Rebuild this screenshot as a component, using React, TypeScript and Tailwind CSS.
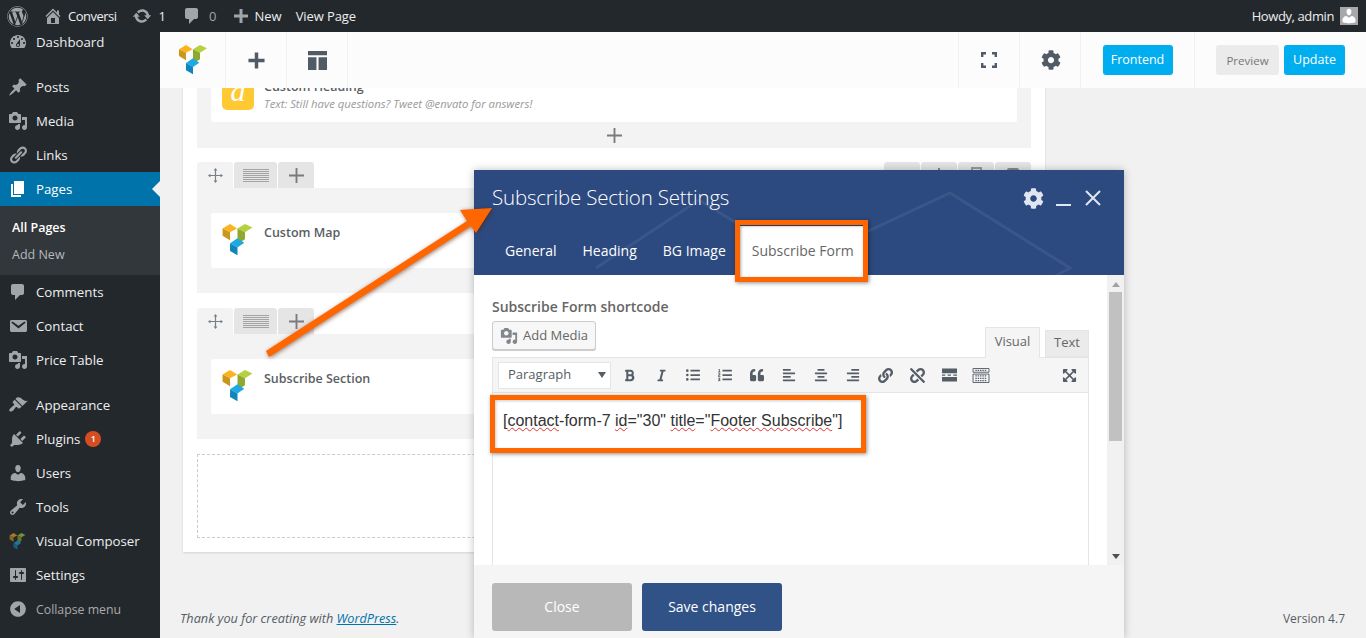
import type { ReactNode } from 'react'
import {
  FaAlignCenter,
  FaAlignLeft,
  FaAlignRight,
  FaBold,
  FaCog,
  FaExpandArrowsAlt,
  FaItalic,
  FaLink,
  FaListOl,
  FaListUl,
  FaQuoteLeft,
  FaUnlink,
  FaWordpress,
} from 'react-icons/fa'

const paths = {
  dashboard:
    'M3.76 16h12.48c1.1-1.37 1.76-3.11 1.76-5 0-4.42-3.58-8-8-8s-8 3.58-8 8c0 1.89.66 3.63 1.76 5zM10 4c.55 0 1 .45 1 1s-.45 1-1 1-1-.45-1-1 .45-1 1-1zM6 6c.55 0 1 .45 1 1s-.45 1-1 1-1-.45-1-1 .45-1 1-1zm8 0c.55 0 1 .45 1 1s-.45 1-1 1-1-.45-1-1 .45-1 1-1zm-5.37 5.55L12 7v6c0 1.1-.9 2-2 2s-2-.9-2-2c0-.57.24-1.08.63-1.45zM4 10c.55 0 1 .45 1 1s-.45 1-1 1-1-.45-1-1 .45-1 1-1zm12 0c.55 0 1 .45 1 1s-.45 1-1 1-1-.45-1-1 .45-1 1-1zm-5 3c0-.55-.45-1-1-1s-1 .45-1 1 .45 1 1 1 1-.45 1-1z',
  post: 'M10.44 3.02l1.82-1.82 6.36 6.35-1.83 1.82c-1.05-.68-2.48-.57-3.41.36l-.75.75c-.92.93-1.04 2.35-.35 3.41l-1.83 1.82-2.41-2.41-2.8 2.79c-.42.42-3.38 2.71-3.8 2.29s1.86-3.39 2.28-3.81l2.79-2.79L4.1 9.36l1.83-1.82c1.05.69 2.48.57 3.4-.36l.75-.75c.93-.92 1.05-2.35.36-3.41z',
  media:
    'M13 11V4c0-.55-.45-1-1-1h-1.67L9 1H5L3.67 3H2c-.55 0-1 .45-1 1v7c0 .55.45 1 1 1h10c.55 0 1-.45 1-1zM7 4.5c1.38 0 2.5 1.12 2.5 2.5S8.38 9.5 7 9.5 4.5 8.38 4.5 7 5.62 4.5 7 4.5zM14 6h5v10.5c0 1.38-1.12 2.5-2.5 2.5S14 17.88 14 16.5s1.12-2.5 2.5-2.5c.17 0 .34.02.5.05V9h-3V6zm-4 8.05V13h2v3.5c0 1.38-1.12 2.5-2.5 2.5S7 17.88 7 16.5 8.12 14 9.5 14c.17 0 .34.02.5.05z',
  links:
    'M17.74 2.76c1.68 1.69 1.68 4.41 0 6.1l-1.53 1.52c-1.12 1.12-2.7 1.47-4.14 1.09l2.62-2.61.76-.77.76-.76c.84-.84.84-2.2 0-3.04-.84-.85-2.2-.85-3.04 0l-.77.76-3.38 3.38c-.37-1.44-.02-3.02 1.1-4.14l1.52-1.53c1.69-1.68 4.42-1.68 6.1 0zM8.59 13.43l5.34-5.34c.42-.42.42-1.1 0-1.52-.44-.43-1.13-.39-1.53 0l-5.33 5.34c-.42.42-.42 1.1 0 1.52.44.43 1.13.39 1.52 0zm-.76 2.29l4.14-4.15c.38 1.44.03 3.02-1.09 4.14l-1.52 1.53c-1.69 1.68-4.41 1.68-6.1 0-1.68-1.68-1.68-4.42 0-6.1l1.53-1.52c1.12-1.12 2.7-1.47 4.14-1.1l-4.14 4.15c-.85.84-.85 2.2 0 3.05.84.84 2.2.84 3.04 0z',
  page: 'M6 15V2h10v13H6zm-1 1h8v2H3V5h2v11z',
  comment: 'M5 2h9c1.1 0 2 .9 2 2v7c0 1.1-.9 2-2 2h-2l-5 5v-5H5c-1.1 0-2-.9-2-2V4c0-1.1.9-2 2-2z',
  email:
    'M3.87 4h13.25C18.37 4 19 4.59 19 5.79v8.42c0 1.19-.63 1.79-1.88 1.79H3.87c-1.25 0-1.88-.6-1.88-1.79V5.79c0-1.2.63-1.79 1.88-1.79zm6.62 8.6l6.74-5.53c.24-.2.43-.66.13-1.07-.29-.41-.82-.42-1.17-.17l-5.7 3.86L4.8 5.83c-.35-.25-.88-.24-1.17.17-.3.41-.11.87.13 1.07z',
  brush:
    'M14.48 11.06L7.41 3.99l1.5-1.5c.5-.56 2.3-.47 3.51.32 1.21.8 1.43 1.28 2.91 2.1 1.18.64 2.45 1.26 4.45.85zm-.71.71L6.7 4.7 4.93 6.47c-.39.39-.39 1.02 0 1.41l1.06 1.06c.39.39.39 1.03 0 1.42-.6.6-1.43 1.11-2.21 1.69-.35.26-.7.53-1.01.84C1.43 13.71.96 15.12 1.37 16c.95.95 2.81.49 3.8-.49.32-.32.59-.66.85-1.01.58-.79 1.09-1.62 1.69-2.21.39-.39 1.02-.39 1.41 0l1.06 1.06c.39.39 1.02.39 1.41 0z',
  plugin:
    'M13.11 4.36L9.87 7.6 8 5.73l3.24-3.24c.35-.34 1.05-.2 1.56.32.52.51.66 1.21.31 1.55zm-8 1.77l.91-1.12 9.01 9.01-1.19.84c-.71.71-2.63 1.16-3.82 1.16H6.14L4.9 17.26c-.59.59-1.54.59-2.12 0-.59-.58-.59-1.53 0-2.12l1.24-1.24v-3.88c0-1.13.4-3.19 1.09-3.89zm7.26 3.97l3.24-3.24c.34-.35 1.04-.21 1.55.31.52.51.66 1.21.31 1.55l-3.24 3.25z',
  users:
    'M10 9.25c-2.27 0-2.73-3.44-2.73-3.44C7 4.02 7.82 2 9.97 2c2.16 0 2.98 2.02 2.71 3.81 0 0-.41 3.44-2.68 3.44zm0 2.57L12.72 10c2.39 0 4.52 2.33 4.52 4.53v2.49s-3.65 1.13-7.24 1.13c-3.65 0-7.24-1.13-7.24-1.13v-2.49c0-2.25 1.94-4.48 4.47-4.48z',
  tools:
    'M16.68 9.77c-1.34 1.34-3.3 1.67-4.95.99l-5.41 6.52c-.99.99-2.59.99-3.58 0s-.99-2.59 0-3.57l6.52-5.42c-.68-1.65-.35-3.61.99-4.95 1.28-1.28 3.12-1.62 4.72-1.06l-2.89 2.89 2.82 2.82 2.86-2.87c.53 1.58.18 3.39-1.08 4.65zM3.81 16.21c.4.39 1.04.39 1.43 0 .4-.4.4-1.04 0-1.43-.39-.4-1.03-.4-1.43 0-.39.39-.39 1.03 0 1.43z',
  settings:
    'M18 16V4c0-.55-.45-1-1-1H3c-.55 0-1 .45-1 1v12c0 .55.45 1 1 1h14c.55 0 1-.45 1-1zM8 11h1c.55 0 1 .45 1 1s-.45 1-1 1H8v1.5c0 .28-.22.5-.5.5s-.5-.22-.5-.5V13H6c-.55 0-1-.45-1-1s.45-1 1-1h1V5.5c0-.28.22-.5.5-.5s.5.22.5.5V11zm5-2h-1c-.55 0-1-.45-1-1s.45-1 1-1h1V5.5c0-.28.22-.5.5-.5s.5.22.5.5V7h1c.55 0 1 .45 1 1s-.45 1-1 1h-1v5.5c0 .28-.22.5-.5.5s-.5-.22-.5-.5V9z',
  collapse: 'M10 2.16c4.33 0 7.84 3.51 7.84 7.84s-3.51 7.84-7.84 7.84S2.16 14.33 2.16 10 5.71 2.16 10 2.16zm2 11.72V6.12L6.18 9.97z',
  home: 'M16 8.5l1.53 1.53-1.06 1.06L10 4.62l-6.47 6.47-1.06-1.06L10 2.5l4 4v-2h2v4zm-6-2.46l6 5.99V18H4v-5.97zM12 17v-5H8v5h4z',
  update:
    'M10.2 3.28c3.53 0 6.43 2.61 6.92 6h2.08l-3.5 4-3.5-4h2.32c-.45-1.97-2.21-3.44-4.32-3.44-1.45 0-2.73.71-3.54 1.78L4.95 5.66C6.23 4.2 8.11 3.28 10.2 3.28zm-.4 13.44c-3.52 0-6.43-2.61-6.92-6H.8l3.5-4c1.17 1.33 2.33 2.67 3.5 4H5.48c.45 1.97 2.21 3.44 4.32 3.44 1.45 0 2.73-.71 3.54-1.78l1.71 1.95c-1.28 1.46-3.15 2.39-5.25 2.39z',
  plus: 'M8.5 3h3v5.5H17v3h-5.5V17h-3v-5.5H3v-3h5.5z',
}

function Dash({ d, className }: { d: string; className?: string }) {
  return (
    <svg viewBox="0 0 20 20" fill="currentColor" className={className}>
      <path d={d} />
    </svg>
  )
}

function VcLogo({ className, dim }: { className?: string; dim?: boolean }) {
  return (
    <svg viewBox="0 0 84 90" className={className} style={dim ? { opacity: 0.6 } : undefined}>
      <polygon points="0,13 21,0 41,13 21,23" fill="#fbb41f" />
      <polygon points="0,13 21,23 21,46 0,33" fill="#c8971b" />
      <polygon points="42,13 63,0 84,10 63,23" fill="#b4d140" />
      <polygon points="42,13 63,23 63,43 42,56" fill="#8fa82e" />
      <polygon points="21,54 42,40 61,53 42,66" fill="#1fa9e3" />
      <polygon points="21,54 42,66 42,88 21,76" fill="#0e86bd" />
    </svg>
  )
}

function AdminBar() {
  return (
    <header className="relative z-20 flex h-8 items-center bg-[#23282d] text-[13px] text-[#eeeeee]">
      <FaWordpress className="ml-[7px] size-[21px] text-[#a0a5aa]" />
      <Dash d={paths.home} className="ml-[15px] size-5 text-[#a0a5aa]" />
      <span className="ml-[5px] pt-[2px] tracking-[-0.5px]">Conversi</span>
      <Dash d={paths.update} className="ml-[15px] size-5 text-[#a0a5aa]" />
      <span className="ml-[7px] pt-[2px]">1</span>
      <Dash d={paths.comment} className="ml-[16px] size-5 text-[#a0a5aa]" />
      <span className="ml-[7px] pt-[2px] text-[#a0a5aa]">0</span>
      <Dash d={paths.plus} className="ml-[15px] size-[20px] text-[#a0a5aa]" />
      <span className="ml-[3px] pt-[2px]">New</span>
      <span className="ml-[14px] pt-[2px] tracking-[-0.1px]">View Page</span>
      <span className="ml-auto pt-[2px] tracking-[-0.4px]">Howdy, admin</span>
      <div className="mr-2 ml-[6px] flex size-[18px] items-end justify-center overflow-hidden bg-[#a8a8a8]">
        <Dash d={paths.users} className="size-[18px] text-white" />
      </div>
    </header>
  )
}

type MenuItem = { label: string; icon: ReactNode; gapBefore?: boolean; badge?: string }

const icon = 'size-5 text-[#a0a5aa]'
const menu: MenuItem[] = [
  { label: 'Dashboard', icon: <Dash d={paths.dashboard} className={icon} /> },
  { label: 'Posts', icon: <Dash d={paths.post} className={icon} />, gapBefore: true },
  { label: 'Media', icon: <Dash d={paths.media} className={icon} /> },
  { label: 'Links', icon: <Dash d={paths.links} className={icon} /> },
]
const menuAfter: MenuItem[] = [
  { label: 'Comments', icon: <Dash d={paths.comment} className={icon} /> },
  { label: 'Contact', icon: <Dash d={paths.email} className={icon} /> },
  { label: 'Price Table', icon: <Dash d={paths.media} className={icon} /> },
  { label: 'Appearance', icon: <Dash d={paths.brush} className={icon} />, gapBefore: true },
  { label: 'Plugins', icon: <Dash d={paths.plugin} className={icon} />, badge: '1' },
  { label: 'Users', icon: <Dash d={paths.users} className={icon} /> },
  { label: 'Tools', icon: <Dash d={paths.tools} className={icon} /> },
  { label: 'Visual Composer', icon: <VcLogo dim className="size-[17px]" /> },
  { label: 'Settings', icon: <Dash d={paths.settings} className={icon} /> },
]

function MenuRow({ item }: { item: MenuItem }) {
  return (
    <li className={item.gapBefore ? 'mt-[11px]' : ''}>
      <div className="flex h-[34px] items-center text-[13.25px] text-[#eeeeee]">
        <span className="flex w-9 justify-center pr-[1px]">{item.icon}</span>
        <span className="pt-[2px]">{item.label}</span>
        {item.badge && (
          <span className="ml-[5px] flex size-4 items-center justify-center rounded-full bg-[#d54e21] text-[9px] font-semibold text-white">
            {item.badge}
          </span>
        )}
      </div>
    </li>
  )
}

function Sidebar() {
  return (
    <aside className="w-40 shrink-0 overflow-visible bg-[#23282d]">
      <ul className="-mt-[7px]">
        {menu.map((m) => (
          <MenuRow key={m.label} item={m} />
        ))}
        <li className="relative flex h-[34px] items-center bg-[#0073aa] text-[13.25px] text-white">
          <span className="flex w-9 justify-center pr-[1px]">
            <Dash d={paths.page} className="size-5 text-white" />
          </span>
          <span className="pt-[2px]">Pages</span>
          <span className="absolute top-[9px] right-0 border-y-[8px] border-r-[8px] border-y-transparent border-r-[#f1f1f1]" />
        </li>
        <li className="h-[69px] bg-[#32373c] pt-[12px] pl-3 text-[12.5px]">
          <div className="h-5 leading-5 font-semibold text-white">All Pages</div>
          <div className="mt-[7px] h-5 leading-5 text-[#b4b9be]">Add New</div>
        </li>
        {menuAfter.map((m) => (
          <MenuRow key={m.label} item={m} />
        ))}
        <li className="flex h-[34px] items-center text-[12.3px] text-[#aaaaaa]">
          <span className="flex w-9 justify-center pr-[1px]">
            <Dash d={paths.collapse} className={icon} />
          </span>
          <span className="pt-[2px]">Collapse menu</span>
        </li>
      </ul>
    </aside>
  )
}

function VcNav() {
  const cell = 'flex w-[61px] items-center justify-center border-r border-[#f1f1f1] text-[#515b66]'
  return (
    <nav className="relative z-10 flex h-14 shrink-0 bg-[#fcfcfc]">
      <div className="flex w-[66px] items-center border-r border-[#f1f1f1] pl-[19px]">
        <VcLogo className="h-[30px] w-[28px]" />
      </div>
      <div className={cell}>
        <Dash d={paths.plus} className="size-[23px]" />
      </div>
      <div className={cell}>
        <svg viewBox="0 0 18 18" className="size-[19px]" fill="currentColor">
          <path d="M0 0h18v4H0zM0 6h8v12H0zM10 6h8v12h-8z" />
        </svg>
      </div>
      <div className="ml-auto flex w-[62px] items-center justify-center border-x border-[#f1f1f1] text-[#515b66]">
        <svg viewBox="0 0 16 16" className="size-4" fill="none" stroke="currentColor" strokeWidth="2.4">
          <path d="M1.2 5V1.2H5M11 1.2h3.8V5M14.8 11v3.8H11M5 14.8H1.2V11" />
        </svg>
      </div>
      <div className={cell}>
        <FaCog className="ml-[2px] size-5" />
      </div>
      <div className="flex w-[114px] items-center justify-center border-r border-[#f1f1f1]">
        <button className="h-[30px] w-[70px] rounded-[3px] bg-[#00aef0] pt-[1px] text-[12.5px] font-medium text-white">Frontend</button>
      </div>
      <div className="flex w-[171px] items-center gap-[5px] pl-[21px]">
        <button className="h-[30px] w-[63px] rounded-[3px] bg-[#ebebeb] pt-[1px] text-[11.5px] text-[#777777]">Preview</button>
        <button className="h-[30px] w-[61px] rounded-[3px] bg-[#00aef0] pt-[1px] text-[12.5px] font-medium text-white">Update</button>
      </div>
    </nav>
  )
}

function RowTabs() {
  return (
    <div className="flex h-[26px] justify-between">
      <div className="flex gap-px">
        <div className="flex w-9 items-center justify-center rounded-t-[3px] bg-[#f3f3f3] text-[#7a8088]">
          <svg viewBox="0 0 16 16" className="size-[15px]" fill="none" stroke="currentColor" strokeWidth="1.3">
            <path d="M8 1v14M1 8h14" />
            <path d="M8 0l2 2.6H6zM8 16l2-2.6H6zM0 8l2.6 2V6zM16 8l-2.6 2V6z" fill="currentColor" stroke="none" />
          </svg>
        </div>
        <div className="flex w-[43px] items-center justify-center rounded-t-[3px] bg-[#e5e5e5]">
          <svg viewBox="0 0 26 13" className="h-[13px] w-[26px]" fill="#a3a3a3">
            <path d="M0 0h26v1H0zM0 2h26v1H0zM0 4h26v1H0zM0 6h26v1H0zM0 8h26v1H0zM0 10h26v1H0zM0 12h26v1H0z" />
          </svg>
        </div>
        <div className="flex w-9 items-center justify-center rounded-t-[3px] bg-[#e5e5e5] text-[#7b7b7b]">
          <svg viewBox="0 0 16 16" className="size-[15px]" fill="currentColor">
            <path d="M7 0h2v7h7v2H9v7H7V9H0V7h7z" />
          </svg>
        </div>
      </div>
      <div className="flex gap-px">
        <div className="w-9 rounded-t-[3px] bg-[#e5e5e5]" />
        <div className="flex w-9 justify-center rounded-t-[3px] bg-[#e5e5e5]">
          <span className="mt-[6px] h-3 w-[2px] bg-[#888888]" />
        </div>
        <div className="flex w-9 justify-center rounded-t-[3px] bg-[#e5e5e5]">
          <span className="mt-[5px] h-3 w-[11px] border-2 border-b-0 border-[#999999]" />
        </div>
        <div className="flex w-9 justify-center rounded-t-[3px] bg-[#e5e5e5]">
          <span className="mt-[6px] h-3 w-3 rounded-t-[2px] bg-[#8a8a8a]" />
        </div>
      </div>
    </div>
  )
}

function ElementCard({ title, subtitle }: { title: string; subtitle?: string }) {
  return (
    <div className={`flex h-[55px] rounded-[2px] bg-white pt-[8px] pl-[11px] ${subtitle ? 'gap-[10px]' : 'gap-[11px]'}`}>
      {subtitle ? (
        <div className="flex h-[35px] w-8 items-center justify-center rounded-[5px] bg-[#ffc933] pb-1 font-['Liberation_Serif',serif] text-[30px] text-white italic">
          a
        </div>
      ) : (
        <VcLogo className="mt-[3px] h-[32px] w-[31px]" />
      )}
      <div className="text-[12.5px]">
        <div className="mt-[3px] h-[18px] leading-[18px] font-semibold text-[#5a5e63]">{title}</div>
        {subtitle && <div className="text-[11.3px] leading-[15px] text-[#999999] italic">{subtitle}</div>}
      </div>
    </div>
  )
}

function Row({ children }: { children: ReactNode }) {
  return <div className="bg-[#f3f3f3] px-[14px] py-[25px]">{children}</div>
}

function Content() {
  return (
    <div className="min-h-0 flex-1 overflow-hidden">
      <section className="ml-[23px] -mt-[46px] w-[862px] bg-white px-[14px] pb-[14px] shadow-[0_1px_2px_rgba(0,0,0,0.12)]">
        <div className="relative bg-[#f3f3f3] px-[14px] pt-[25px] pb-[26px]">
          <ElementCard title="Custom Heading" subtitle="Text: Still have questions? Tweet @envato for answers!" />
          <svg viewBox="0 0 16 16" className="absolute bottom-[5px] left-[410px] size-[15px] text-[#7b7b7b]" fill="currentColor">
            <path d="M7 0h2v7h7v2H9v7H7V9H0V7h7z" />
          </svg>
        </div>
        <div className="mt-[14px]">
          <RowTabs />
          <Row>
            <ElementCard title="Custom Map" />
          </Row>
        </div>
        <div className="mt-[15px]">
          <RowTabs />
          <Row>
            <ElementCard title="Subscribe Section" />
          </Row>
        </div>
        <div className="mt-[15px] h-[84px] border border-dashed border-[#cccccc]" />
      </section>
      <footer className="mt-[56px] flex h-5 items-center justify-between pt-[2px] pr-[21px] pl-5 text-[#555d66]">
        <span className="text-[12.7px] italic">
          Thank you for creating with <span className="text-[#0073aa] underline">WordPress</span>.
        </span>
        <span className="text-[12px]">Version 4.7</span>
      </footer>
    </div>
  )
}

function Misspelled({ children }: { children: ReactNode }) {
  return <span className="underline decoration-[#e03030] decoration-wavy decoration-1 underline-offset-1">{children}</span>
}

function ToolIcon({ children }: { children: ReactNode }) {
  return <span className="flex h-[27px] w-8 items-center justify-center text-[#555d66]">{children}</span>
}

function Modal() {
  return (
    <div className="absolute top-[170px] left-[474px] flex h-[468px] w-[650px] flex-col shadow-[0_0_8px_rgba(0,0,0,0.25)]">
      <div className="relative h-[105px] shrink-0 bg-[#2c4a7f] text-white">
        <svg viewBox="0 0 650 105" className="absolute inset-0 size-full" fill="none" stroke="#ffffff" strokeOpacity="0.07" strokeWidth="3">
          <path d="M122 98L225 30L290 70M300 105L476 23L596 98L520 140" />
        </svg>
        <div className="relative flex h-[56px] items-center justify-between pr-[23px] pl-[18px]">
          <h2 className="pb-[2px] text-[20.5px] font-light tracking-[-0.2px]">Subscribe Section Settings</h2>
          <div className="flex items-center gap-[12px] text-[#dfe6f1]">
            <FaCog className="size-[21px]" />
            <span className="mt-[14px] h-[2px] w-[15px] bg-[#dfe6f1]" />
            <svg viewBox="0 0 16 16" className="ml-[2px] size-[16px]" fill="none" stroke="currentColor" strokeWidth="2">
              <path d="M1 1l14 14M15 1L1 15" />
            </svg>
          </div>
        </div>
        <div className="relative flex h-[49px] pl-[18px] text-[14px]">
          <span className="flex items-center px-[13px]">General</span>
          <span className="flex items-center px-[13px]">Heading</span>
          <span className="flex items-center px-[13px]">BG Image</span>
          <span className="relative flex items-center bg-white px-[13px] text-[#666666]">
            Subscribe Form
            <span className="absolute -top-[6px] -right-[1px] -bottom-[7px] -left-[4px] border-[5px] border-[#ff6600] shadow-[1px_1px_4px_rgba(0,0,0,0.45),inset_1px_1px_3px_rgba(0,0,0,0.35)]" />
          </span>
        </div>
      </div>
      <div className="flex h-[290px] shrink-0 bg-white">
        <div className="min-w-0 flex-1 pt-[22px] pl-[18px] pr-[18px]">
          <div className="h-5 text-[14px] leading-5 font-semibold text-[#666666]">Subscribe Form shortcode</div>
          <div className="mt-1 flex h-[36px] items-start justify-between">
            <button className="flex h-[29px] w-[104px] items-center gap-[5px] rounded-[3px] border border-[#cccccc] bg-[#f7f7f7] pl-[7px] text-[13px] text-[#666666] shadow-[0_1px_0_#cccccc]">
              <Dash d={paths.media} className="size-[18px] text-[#82878c]" />
              Add Media
            </button>
            <div className="flex items-end gap-[5px] self-end">
              <span className="relative z-10 -mb-px flex h-[31px] w-[55px] items-center justify-center border border-b-0 border-[#e5e5e5] bg-[#f5f5f5] pb-[2px] text-[13px] text-[#666666]">
                Visual
              </span>
              <span className="flex h-[27px] w-[44px] items-center justify-center border border-[#e5e5e5] bg-[#ebebeb] pb-[2px] text-[13px] text-[#666666]">
                Text
              </span>
            </div>
          </div>
          <div className="flex h-[36px] items-center border border-[#e5e5e5] bg-[#f5f5f5] pr-[3px] pl-[5px]">
            <div className="mr-[2px] flex h-[27px] w-[113px] items-center justify-between border border-[#e5e5e5] bg-white pr-[4px] pl-[9px] text-[13px] text-[#555d66]">
              Paragraph
              <span className="border-x-[4px] border-t-[6px] border-x-transparent border-t-[#555d66]" />
            </div>
            <ToolIcon><FaBold className="size-[13px]" /></ToolIcon>
            <ToolIcon><FaItalic className="size-[13px]" /></ToolIcon>
            <ToolIcon><FaListUl className="size-[14px]" /></ToolIcon>
            <ToolIcon><FaListOl className="size-[14px]" /></ToolIcon>
            <ToolIcon><FaQuoteLeft className="size-[14px]" /></ToolIcon>
            <ToolIcon><FaAlignLeft className="size-[14px]" /></ToolIcon>
            <ToolIcon><FaAlignCenter className="size-[14px]" /></ToolIcon>
            <ToolIcon><FaAlignRight className="size-[14px]" /></ToolIcon>
            <ToolIcon><FaLink className="size-[15px]" /></ToolIcon>
            <ToolIcon><FaUnlink className="size-[15px]" /></ToolIcon>
            <ToolIcon>
              <svg viewBox="0 0 16 14" className="h-[14px] w-[15px]" fill="currentColor">
                <path d="M0 0h16v5H0zM0 9h16v5H0zM0 6.5h3.5v1.2H0zM6 6.5h3.5v1.2H6zM12 6.5h4v1.2h-4z" />
              </svg>
            </ToolIcon>
            <ToolIcon>
              <svg viewBox="0 0 18 16" className="h-[15px] w-[18px]" fill="none" stroke="currentColor">
                <path d="M.5.5h17v4H.5zM.5 6.5h17v9H.5z" />
                <path d="M3 8.5h12M3 11h12M3 13.5h12M3 2.5h12" strokeDasharray="1.5 1" strokeWidth="1.3" />
              </svg>
            </ToolIcon>
            <span className="ml-auto">
              <ToolIcon><FaExpandArrowsAlt className="size-[15px]" /></ToolIcon>
            </span>
          </div>
          <div className="relative h-[172px] border-x border-[#e5e5e5]">
            <div className="absolute top-[2px] -left-[3px] flex h-[58px] w-[376px] items-center border-[5px] border-[#ff6600] pb-[6px] pl-[8px] font-['Liberation_Sans',sans-serif] text-[16px] whitespace-nowrap text-[#333333] shadow-[1px_1px_4px_rgba(0,0,0,0.45),inset_1px_1px_3px_rgba(0,0,0,0.2)]">
              <span>
                [<Misspelled>contact</Misspelled>-form-7 <Misspelled>id</Misspelled>="30" <Misspelled>title</Misspelled>="<Misspelled>Footer Subscribe</Misspelled>"]
              </span>
            </div>
          </div>
        </div>
        <div className="flex w-[17px] shrink-0 flex-col items-center bg-[#f1f1f1]">
          <span className="mt-[7px] border-x-[4px] border-b-[5px] border-x-transparent border-b-[#a3a3a3]" />
          <span className="mt-[5px] h-[149px] w-[13px] bg-[#c1c1c1]" />
          <span className="mt-auto mb-[6px] border-x-[4px] border-t-[5px] border-x-transparent border-t-[#505050]" />
        </div>
      </div>
      <div className="flex flex-1 gap-[10px] bg-[#f5f5f5] pt-[18px] pl-[18px]">
        <button className="h-[48px] w-[140px] rounded-[3px] bg-[#b8b8b8] pb-[2px] text-[14px] text-white">Close</button>
        <button className="h-[48px] w-[140px] rounded-[3px] bg-[#315287] pb-[2px] text-[14px] text-white">Save changes</button>
      </div>
    </div>
  )
}

function Arrow() {
  return (
    <svg
      viewBox="0 0 250 170"
      className="pointer-events-none absolute top-[200px] left-[255px] h-[170px] w-[250px] drop-shadow-[1px_1px_2px_rgba(90,30,0,0.6)]"
    >
      <polygon points="237,8 205,10 212,21 11,151 14,157 216,26 221,33" fill="#ff6600" />
    </svg>
  )
}

export default function App() {
  return (
    <div className="relative h-[638px] w-[1366px] overflow-hidden bg-[#f1f1f1] font-['Open_Sans',sans-serif]">
      <AdminBar />
      <div className="flex h-[606px]">
        <Sidebar />
        <main className="flex min-w-0 flex-1 flex-col">
          <VcNav />
          <Content />
        </main>
      </div>
      <Modal />
      <Arrow />
    </div>
  )
}
